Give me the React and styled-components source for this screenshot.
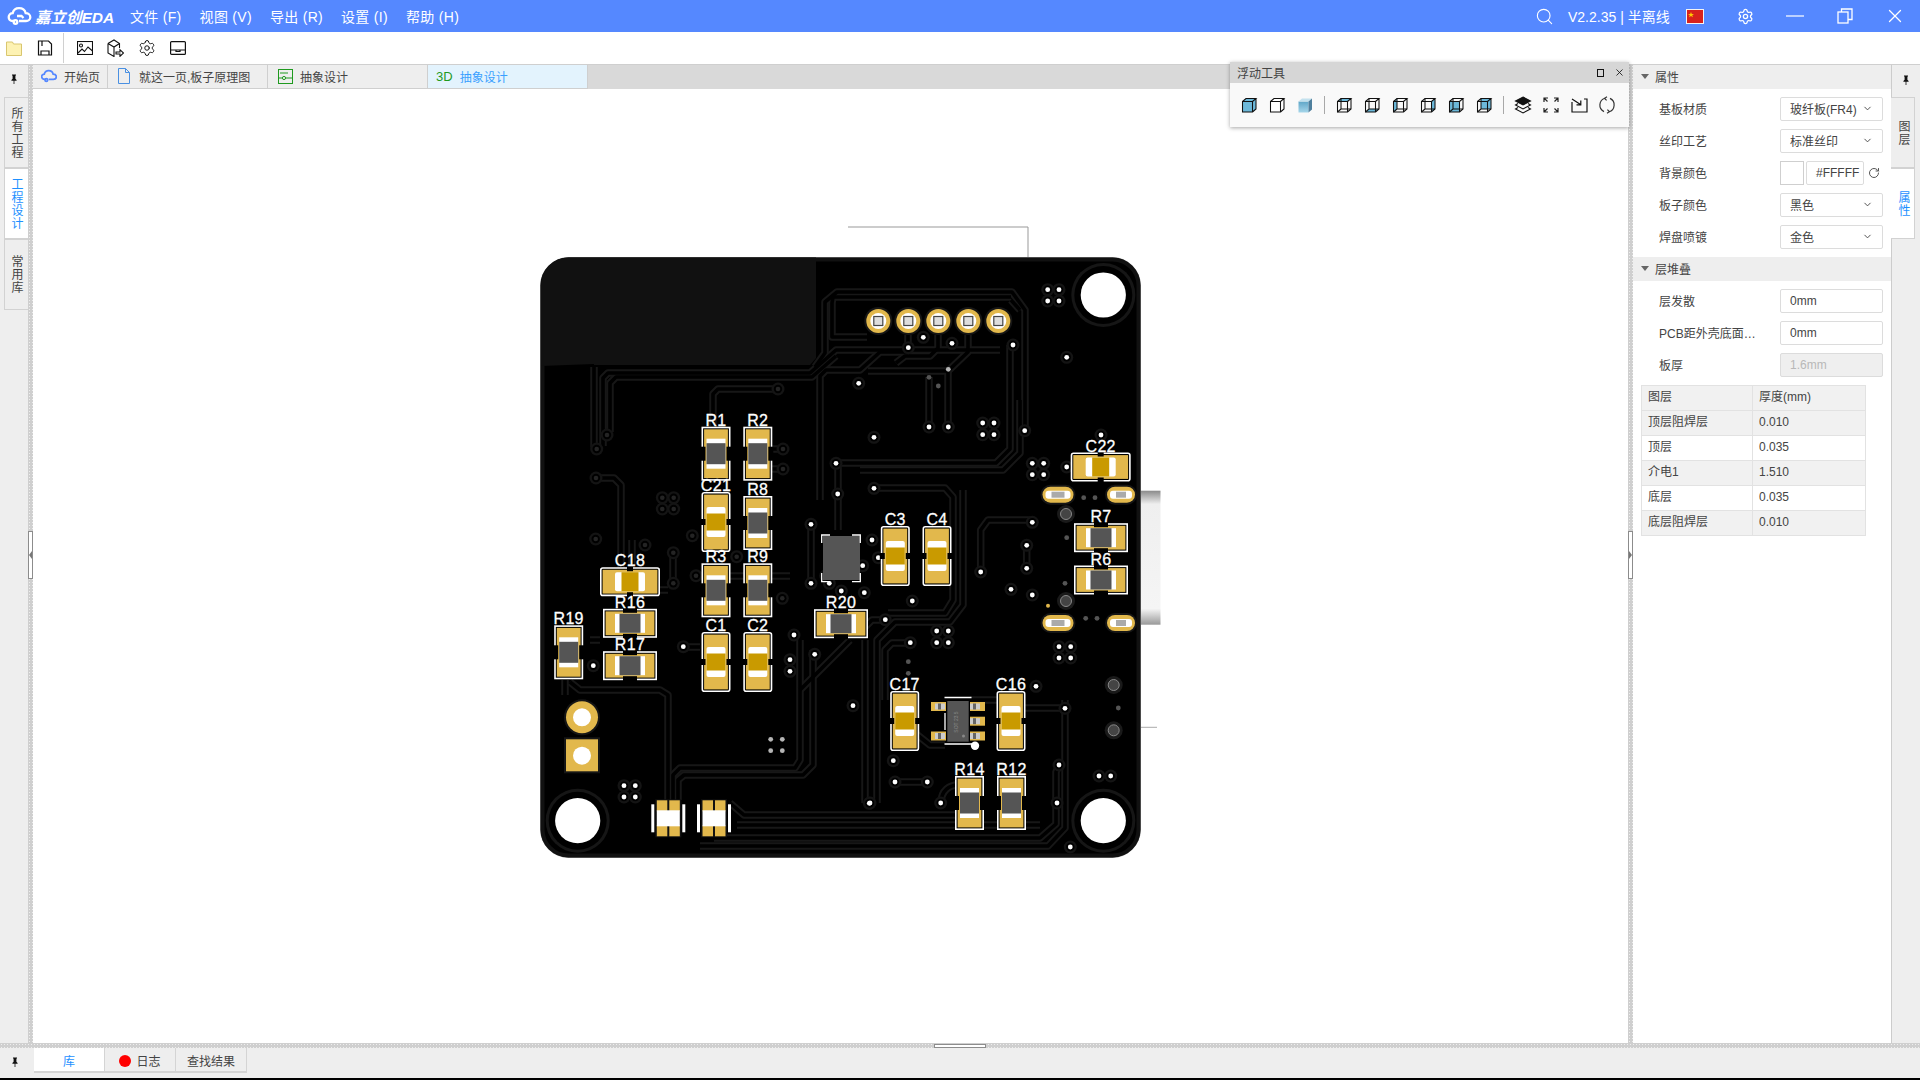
import React from 'react';
import styled, { createGlobalStyle } from 'styled-components';
import { Search, Settings, X, RotateCw, ChevronDown } from 'lucide-react';

const FONT = `"Liberation Sans", "Noto Sans CJK SC", sans-serif`;

const GlobalStyle = createGlobalStyle`
  html, body { margin: 0; padding: 0; background: #fff; }
  body { font-family: ${FONT}; font-size: 12px; color: #333; overflow: hidden; }
  * { box-sizing: border-box; }
`;

const Page = styled.div`
  width: 1920px;
  height: 1080px;
  display: flex;
  flex-direction: column;
  overflow: hidden;
`;

const TitleBar = styled.header`
  height: 32px;
  background: #5588ff;
  color: #fff;
  display: flex;
  align-items: center;
  flex: none;
`;

const Logo = styled.div`
  display: flex;
  align-items: center;
  gap: 3px;
  padding-left: 7px;
  width: 130px;
  font-weight: 700;
  font-style: italic;
  font-size: 15.5px;
  white-space: nowrap;
`;

const Menu = styled.nav`
  display: flex;
  gap: 18px;
  font-size: 14px;
  letter-spacing: 0.3px;
  white-space: nowrap;
  padding-bottom: 1px;
`;

const TitleRight = styled.div`
  margin-left: auto;
  display: flex;
  align-items: center;
  height: 100%;
`;

const TitleSlot = styled.div`
  width: ${(p) => p.$w}px;
  display: flex;
  align-items: center;
  justify-content: ${(p) => p.$justify || 'center'};
  padding-left: ${(p) => p.$pad || 0}px;
  font-size: ${(p) => p.$fs || 13}px;
  white-space: nowrap;
`;

const Toolbar = styled.div`
  height: 32px;
  flex: none;
  background: #fff;
  display: flex;
  align-items: center;
  padding-left: 6px;
`;

const ToolButton = styled.div`
  width: ${(p) => p.$w || 31}px;
  height: 20px;
  display: flex;
  align-items: center;
  justify-content: ${(p) => p.$justify || 'center'};
`;

const ToolDivider = styled.div`
  width: 1px;
  height: 30px;
  background: #d0d0d0;
  margin: 0 5px 0 4px;
`;

const Main = styled.div`
  flex: 1;
  min-height: 0;
  display: flex;
  border-top: 1px solid #cfcfcf;
`;

const LeftDock = styled.aside`
  width: 28px;
  flex: none;
  background: #eeeeee;
  display: flex;
  flex-direction: column;
  padding-left: 4px;
`;

const DockPin = styled.div`
  height: 32px;
  margin-left: -4px;
  padding-bottom: 5px;
  display: flex;
  align-items: center;
  justify-content: center;
  color: #222;
`;

const VTab = styled.div`
  height: 71px;
  display: flex;
  align-items: center;
  justify-content: center;
  writing-mode: vertical-rl;
  letter-spacing: 1px;
  line-height: 1;
  font-size: 12px;
  padding-left: ${(p) => (p.$side === 'right' ? 1 : 0)}px;
  padding-right: ${(p) => (p.$side === 'left' ? 1 : 0)}px;
  background: ${(p) => (p.$active ? '#fff' : '#eeeeee')};
  color: ${(p) => (p.$active ? '#1e90ff' : '#444')};
  border: 1px solid #d2d2d2;
  border-right: ${(p) => (p.$side === 'left' ? 'none' : '1px solid #d2d2d2')};
  border-left: ${(p) => (p.$side === 'right' ? 'none' : '1px solid #d2d2d2')};
`;

const Splitter = styled.div`
  width: 5px;
  flex: none;
  position: relative;
  background-color: #cfcfcf;
  background-image: radial-gradient(#eeeeee 0.7px, transparent 0.8px);
  background-size: 3px 3px;
`;

const Grip = styled.div`
  position: absolute;
  left: 0;
  top: 466px;
  width: 5px;
  height: 48px;
  background: #fff;
  border: 1px solid #8c8c8c;
  &::after {
    content: '';
    position: absolute;
    left: 0;
    top: 19px;
    border-style: solid;
    border-width: 4px 3px;
    border-color: transparent;
    border-${(p) => (p.$dir === 'right' ? 'left' : 'right')}-color: #777;
    margin-left: ${(p) => (p.$dir === 'right' ? 0 : -3)}px;
  }
`;

const Center = styled.main`
  flex: 1;
  min-width: 0;
  display: flex;
  flex-direction: column;
  position: relative;
`;

const TabRow = styled.div`
  height: 24px;
  flex: none;
  display: flex;
  background: #d9d9d9;
`;

const DocTab = styled.div`
  width: ${(p) => p.$w}px;
  display: flex;
  align-items: center;
  gap: ${(p) => p.$gap || 7}px;
  padding-left: ${(p) => p.$pad || 8}px;
  padding-bottom: 1px;
  background: ${(p) => (p.$active ? '#e3f3fd' : '#eeeeee')};
  color: ${(p) => (p.$active ? '#3a9fff' : '#444')};
  border-right: 1px solid #cfcfcf;
  border-bottom: 1px solid #cfcfcf;
  white-space: nowrap;
`;

const ThreeD = styled.span`
  color: #1f9a1f;
  font-size: 13px;
`;

const Canvas = styled.div`
  flex: 1;
  background: #fff;
  padding: 131px 0 0 497px;
`;

const FloatPanel = styled.section`
  position: absolute;
  top: -3px;
  right: -1px;
  width: 399px;
  height: 65px;
  background: #f9f9f9;
  box-shadow: 0 1px 4px rgba(0, 0, 0, 0.35);
  z-index: 5;
`;

const FloatHead = styled.div`
  height: 21px;
  background: #d6d6d6;
  display: flex;
  align-items: center;
  padding: 0 4px 0 7px;
  color: #444;
`;

const FloatHeadIcons = styled.div`
  margin-left: auto;
  display: flex;
  align-items: center;
  gap: 10px;
`;

const MaxBox = styled.div`
  width: 7px;
  height: 8px;
  border: 1px solid #111;
`;

const FloatBody = styled.div`
  height: 44px;
  display: flex;
  align-items: center;
  padding-left: 5px;
`;

const FloatIcon = styled.div`
  width: 28px;
  display: flex;
  justify-content: center;
`;

const FloatDivider = styled.div`
  width: 1px;
  height: 18px;
  background: #a8a8a8;
  margin: 0 5px;
`;

const RightPanel = styled.aside`
  width: 258px;
  flex: none;
  background: #fff;
  display: flex;
  flex-direction: column;
`;

const SectionHead = styled.div`
  height: 24px;
  background: #eeeeee;
  display: flex;
  align-items: center;
  gap: 6px;
  padding: 0 0 1px 8px;
  color: #444;
`;

const Caret = styled.span`
  width: 0;
  height: 0;
  border-style: solid;
  border-width: 5px 4.5px 0;
  border-color: #666 transparent transparent;
`;

const Fields = styled.div`
  display: flex;
  flex-direction: column;
  gap: 8px;
  padding: 8px 8px 8px 26px;
`;

const Field = styled.div`
  height: 24px;
  display: flex;
  align-items: center;
  color: #444;
`;

const FieldLabel = styled.label`
  width: 121px;
  white-space: nowrap;
  overflow: hidden;
  padding-bottom: 1px;
`;

const Control = styled.div`
  width: ${(p) => p.$w || 103}px;
  height: 24px;
  border: 1px solid #dcdcdc;
  border-radius: 2px;
  background: ${(p) => (p.$disabled ? '#efefef' : '#fff')};
  color: ${(p) => (p.$disabled ? '#b8b8b8' : '#444')};
  display: flex;
  align-items: center;
  justify-content: space-between;
  padding: 0 9px 1px;
  white-space: nowrap;
  overflow: hidden;
`;

const Swatch = styled.div`
  width: 24px;
  height: 24px;
  border: 1px solid #cfcfcf;
  background: #fff;
  margin-right: 2px;
  flex: none;
`;

const ThickTable = styled.table`
  width: 225px;
  margin: 0 0 0 8px;
  border-collapse: collapse;
  table-layout: fixed;
  color: #444;
  td {
    height: 25px;
    padding: 0 6px 3px;
    border: 1px solid #e2e2e2;
    line-height: 16px;
  }
  td:first-child { width: 111px; }
  tr:nth-child(odd) td { background: #fff; }
  tr:nth-child(even) td { background: #f1f1f1; }
  tr:first-child td { background: #f1f1f1; }
`;

const RightDock = styled.aside`
  width: 29px;
  flex: none;
  background: #eeeeee;
  border-left: 1px solid #cccccc;
  display: flex;
  flex-direction: column;
`;

const RightPin = styled.div`
  height: 32px;
  display: flex;
  align-items: center;
  justify-content: center;
  padding: 0 1px 3px 0;
`;

const RightTabs = styled.div`
  width: 24px;
  margin-left: -1px;
  display: flex;
  flex-direction: column;
`;

const HSplitter = styled.div`
  height: 5px;
  flex: none;
  position: relative;
  background-color: #cfcfcf;
  background-image: radial-gradient(#eeeeee 0.7px, transparent 0.8px);
  background-size: 3px 3px;
`;

const HGrip = styled.div`
  position: absolute;
  left: 934px;
  top: 1px;
  width: 52px;
  height: 4px;
  background: #fff;
  border: 1px solid #8c8c8c;
`;

const BottomBar = styled.footer`
  height: 30px;
  flex: none;
  background: #eeeeee;
  display: flex;
  padding-left: 34px;
  position: relative;
`;

const BottomPin = styled.div`
  position: absolute;
  left: 10px;
  top: 8px;
`;

const BottomTab = styled.div`
  width: 71px;
  height: 25px;
  display: flex;
  align-items: center;
  justify-content: center;
  gap: 5px;
  padding-top: 2px;
  background: ${(p) => (p.$active ? '#fff' : '#eeeeee')};
  color: ${(p) => (p.$active ? '#1e90ff' : '#444')};
  border-right: 1px solid #d4d4d4;
  border-bottom: 2px solid #d4d4d4;
`;

const RedDot = styled.span`
  width: 12px;
  height: 12px;
  border-radius: 50%;
  background: #f00;
`;

const BlackEdge = styled.div`
  height: 2px;
  background: #000;
  flex: none;
`;

// ---- icons

function PinIcon({ size = 10 }) {
  return (
    <svg width={size} height={size} viewBox="0 0 10 10">
      <path d="M3 0.5h4v1H6.4v3.2L7.6 6v0.8H2.4V6l1.2-1.3V1.5H3z M4.6 6.8h0.8V10H4.6z" fill="#111" />
    </svg>
  );
}

function CloudLogo() {
  return (
    <svg width="25" height="18" viewBox="0 0 24 18" fill="none" stroke="#fff" strokeWidth="2.3">
      <path d="M7 14H5.5C3 14 1.2 12.4 1.2 10c0-2.2 1.8-3.9 4-3.9C6 3 8.4 1.2 11.5 1.2c3.4 0 6 2.2 6.7 5 2.6 0 4.6 1.6 4.6 4 0 2.3-2 3.8-4.3 3.8h-7" />
      <circle cx="8" cy="15" r="1.8" />
      <path d="M9.5 9h4.5l2 2" />
    </svg>
  );
}

function Flag() {
  return (
    <svg width="18" height="15" viewBox="0 0 18 15">
      <rect x="0.5" y="0.5" width="17" height="14" fill="#d8211c" stroke="#f4f4f4" />
      <path d="M5 3l0.8 2H8L6.2 6.2 7 8.3 5 7 3 8.3l0.8-2.1L2 5h2.2z" fill="#fc0" />
    </svg>
  );
}

function MinimizeIcon() {
  return (
    <svg width="18" height="4" viewBox="0 0 18 4">
      <rect x="0" y="1.4" width="18" height="1.2" fill="#fff" />
    </svg>
  );
}

function RestoreIcon() {
  return (
    <svg width="16" height="16" viewBox="0 0 16 16" fill="none" stroke="#fff" strokeWidth="1.3">
      <rect x="1" y="4" width="10" height="11" />
      <path d="M4.5 4V1H15v10.5h-4" />
    </svg>
  );
}

function FolderIcon() {
  return (
    <svg width="16" height="16" viewBox="0 0 16 16">
      <path d="M0.5 2h6l1 2h8v11.5H0.5z" fill="#fdf2b3" stroke="#d9c66f" />
    </svg>
  );
}

function SaveIcon() {
  return (
    <svg width="16" height="16" viewBox="0 0 16 16" fill="none" stroke="#111" strokeWidth="1.2">
      <path d="M1.5 1h10l3 3v11h-13z M4 15v-4h8v4 M5 1v5" />
    </svg>
  );
}

function ImageIcon() {
  return (
    <svg width="16" height="14" viewBox="0 0 16 14" fill="none" stroke="#111" strokeWidth="1.1">
      <rect x="0.5" y="0.5" width="15" height="13" />
      <circle cx="4" cy="4.5" r="1.5" />
      <path d="M1 12l4-4 2.5 2.5L11 6l4.5 4" />
    </svg>
  );
}

function BoxExportIcon() {
  return (
    <svg width="17" height="18" viewBox="0 0 17 18" fill="none" stroke="#111" strokeWidth="1.1">
      <path d="M1 4.5L7 1l5.5 3.5V9 M1 4.5V14l6 3.5V8 M1 4.5L7 8l5.5-3.5" />
      <path d="M9 13h4V10.7l3.5 3.3-3.5 3.3V15H9z" />
    </svg>
  );
}

function PanelIcon() {
  return (
    <svg width="16" height="14" viewBox="0 0 16 14" fill="none" stroke="#111" strokeWidth="1.2">
      <rect x="0.6" y="0.6" width="14.8" height="12.8" rx="1" />
      <path d="M0.6 9h14.8 M6 9v1.5h4V9" />
    </svg>
  );
}

function StartCloud() {
  return (
    <svg width="16" height="14" viewBox="0 0 24 20" fill="none" stroke="#5588ff" strokeWidth="2.6">
      <path d="M7 15H5.5C3 15 1 13.4 1 11c0-2.2 1.8-3.9 4-3.9C5.8 4 8.4 2 11.5 2c3.4 0 6 2.2 6.7 5.2 2.6 0 4.8 1.6 4.8 4 0 2.3-2 3.8-4.5 3.8h-7" />
      <circle cx="8" cy="16" r="2" />
    </svg>
  );
}

function DocIcon() {
  return (
    <svg width="12" height="16" viewBox="0 0 12 16" fill="none" stroke="#4a90e2">
      <path d="M0.5 0.5h7l4 4v11h-11z M7.5 0.5v4h4" />
    </svg>
  );
}

function PcbTabIcon() {
  return (
    <svg width="15" height="15" viewBox="0 0 15 15" fill="none" stroke="#1f9a1f">
      <rect x="0.5" y="0.5" width="14" height="14" />
      <path d="M0.5 9h4 M7.5 9h7 M2 4h8" />
      <circle cx="6" cy="9" r="1.6" />
    </svg>
  );
}

const CUBE_BLUE = '#6cb8d9';

// wireframe box, face says which side is shaded
function CubeIcon({ face, solid, blank }) {
  const faces = {
    top: 'M1.5 4.5L5 1.5H15L11.5 4.5z',
    right: 'M11.5 4.5L15 1.5V12L11.5 15z',
    front: 'M1.5 4.5H11.5V15H1.5z',
    back: 'M5 1.5H15V12H5z',
    left: 'M1.5 4.5L5 1.5V12L1.5 15z',
    bottom: 'M1.5 15L5 12H15L11.5 15z',
  };
  return (
    <svg width="17" height="17" viewBox="0 0 17 17" fill="none" stroke="#111" strokeWidth="1.05">
      {solid && <path d="M1.5 4.5L5 1.5H15V12L11.5 15H1.5z" fill={CUBE_BLUE} stroke="none" />}
      {face && <path d={faces[face]} fill={CUBE_BLUE} stroke="none" />}
      {blank && <path d="M1.5 4.5L5 1.5H15V12L11.5 15H1.5z" fill="#fff" stroke="none" />}
      <path d="M1.5 4.5H11.5V15H1.5z M1.5 4.5L5 1.5H15L11.5 4.5 M15 1.5V12L11.5 15" />
      {!solid && !blank && <path d="M5 1.5V12H15 M5 12L1.5 15" />}
    </svg>
  );
}

function ShadedCube() {
  return (
    <svg width="17" height="17" viewBox="0 0 17 17">
      <defs>
        <linearGradient id="cubeFront" x1="0" y1="0" x2="0" y2="1">
          <stop offset="0" stopColor="#5fa6c8" />
          <stop offset="1" stopColor="#a6d6ea" />
        </linearGradient>
      </defs>
      <path d="M1.5 4.5H11.5V15.5H1.5z" fill="url(#cubeFront)" />
      <path d="M1.5 4.5L5 1.5H15L11.5 4.5z" fill="#c3e1ee" />
      <path d="M11.5 4.5L15 1.5V12.5L11.5 15.5z" fill="#4f7f9d" />
    </svg>
  );
}

function LayersIcon() {
  return (
    <svg width="18" height="18" viewBox="0 0 18 18" fill="none" stroke="#111" strokeWidth="1.1">
      <path d="M9 1L16.5 5 9 9 1.5 5z" fill="#111" />
      <path d="M4 7.5L1.5 9 9 13l7.5-4L14 7.5 M4 11.5L1.5 13 9 17l7.5-4L14 11.5" />
    </svg>
  );
}

function FitIcon() {
  return (
    <svg width="16" height="16" viewBox="0 0 16 16" fill="none" stroke="#222" strokeWidth="1.2">
      <path d="M1 5V1h4 M1 1l3.5 3.5 M15 5V1h-4 M15 1l-3.5 3.5 M1 11v4h4 M1 15l3.5-3.5 M15 11v4h-4 M15 15l-3.5-3.5" />
    </svg>
  );
}

function ImportIcon() {
  return (
    <svg width="17" height="16" viewBox="0 0 17 16" fill="none" stroke="#111" strokeWidth="1.2">
      <path d="M1 5v10h15V2h-3" />
      <path d="M1 2l8.5 5.5 M9.8 3.5v4.3H5.5" />
    </svg>
  );
}

function RotateIcon() {
  return (
    <svg width="18" height="18" viewBox="0 0 18 18" fill="none" stroke="#333" strokeWidth="1.2">
      <path d="M7 2.2A7.2 7.2 0 0 0 6 15.6 M11 15.8A7.2 7.2 0 0 0 12 2.4" />
      <path d="M9 0.8L6.6 2.3 8.6 4.4 M9 17.2l2.4-1.5-2-2.1" />
    </svg>
  );
}

// ---- board data, in page coordinates

const WHITE_VIAS = [
  [858.7, 383.3], [836, 463.3], [837.7, 494], [1047.7, 289.7], [1059, 289.7], [1047.7, 301], [1059, 301],
  [923.3, 337.3], [908.3, 347.7], [952, 343.3], [1013, 345], [1066.7, 357.3], [929, 427], [948.3, 427],
  [1024.7, 430.7], [982.7, 423], [994, 423], [982.7, 434.7], [994, 434.7], [874, 437.3], [1101, 435],
  [1032.3, 463.3], [1043.7, 463.3], [1032.3, 474.7], [1043.7, 474.7], [1066.7, 467], [874, 488.3],
  [683.3, 646.7], [593.3, 665.7], [794, 635], [790, 659.7], [790, 671.3], [814.7, 654.3], [853, 705.7],
  [624, 785.7], [635.3, 785.7], [624, 797], [635.3, 797], [811, 524.3], [811, 583.3], [862.7, 565.7],
  [825.7, 575.7], [829.3, 583.3], [841.3, 591], [864.3, 592.7], [869.3, 803.3], [872, 540], [878.3, 557.7],
  [912.3, 601], [885.3, 619.7], [936.7, 631], [948.3, 631], [936.7, 642.7], [948.3, 642.7], [910.3, 642.7],
  [1036, 686.3], [1065, 708.3], [893.3, 760.7], [895, 782], [927.3, 782], [940.7, 803], [870, 803],
  [1059, 765], [1057, 803], [1099, 776], [1110.7, 776], [1070.3, 847], [980.7, 572], [1026.7, 545.3],
  [1026.7, 568.3], [1011, 589.3], [1032.3, 595], [1059, 646.7], [1070.7, 646.7], [1059, 658], [1070.7, 658],
  [1032.3, 522.3],
];

const GRAY_VIAS = [
  [929, 377.3], [938.3, 386], [1083.7, 497.7], [1095, 497.7], [908.3, 661.7], [908.3, 673.3],
  [1065, 583.3], [1066.7, 537.7], [1085.7, 618.3], [1097, 618.3], [1118.3, 708],
];

const LIGHT_VIAS = [[770.7, 739.3], [782.3, 739.3], [770.7, 750.7], [782.3, 750.7], [948.3, 369.3]];

const DIM_VIAS = [
  [662.3, 497.7], [673.7, 497.7], [662.3, 509], [673.7, 509], [596.7, 449], [607, 435], [778, 389],
  [783, 449], [783, 469], [596, 478], [595.7, 539], [645, 545], [673.3, 552.7], [673.3, 583.3], [696, 575.7],
  [692.3, 535.7], [736.7, 556.7], [782.3, 598.3],
];

const TRACES = [
  'M594 367V447',
  'M603 446V378L608 373H810L836 350H1000',
  'M610 432V383L616 377H812L836 356',
  'M778 389H718L713 394V426',
  'M783 449H745 M783 469H745',
  'M596 478H614L621 485V580L628 590H668',
  'M836 463H996L1010 449V345',
  'M860 470H1003L1020 453V400',
  'M1025 431V310L1012 292H837L825 302V353L815 367',
  'M1011 297H833L832 303V337H867',
  'M1020 310L1011 300',
  'M908 335V352H880L860 370H826L820 376V500',
  'M938 335V348L930 356H905L896 363',
  'M968 335V352L948 371 H868',
  'M929 377V427 M948 369V427',
  'M874 488H945L953 497V600L945 613H888',
  'M980.7 572V530L988 520H1032',
  'M1026.7 545V568',
  'M963 490V605L950 622H895L877 640V803',
  'M865 640V803',
  'M885 620H872L860 632',
  'M910 643H892L885 650V700',
  'M668 800V695L660 690H580L570 682',
  'M673 800V775L680 768H795L800 760V640',
  'M678 800V780L684 775H803L813 765V650',
  'M730 803L744 815H955',
  'M737 825H1040',
  'M714 838H1040L1056 824V772L1059 765',
  'M700 846H1048L1065 828V700',
  'M895 782H927',
  'M941 803C941 790 950 785 958 785',
  'M1065 708H1020',
  'M683 647H700',
  'M850 640L800 690',
  'M632 540V565 M673 553V583 M696 576H790',
  'M838 463V530 M811 524V583',
  'M1012 700H970',
  'M905 725L930 745H945',
  'M590 640H600 M565 680V695',
];

const BoardLabel = styled.text`
  fill: #fff;
  stroke: #fff;
  stroke-width: 0.3px;
  font-family: "Liberation Sans", sans-serif;
  font-size: 16px;
  letter-spacing: 0.3px;
  text-anchor: middle;
`;

const ChipText = styled.text`
  fill: #8a8a8a;
  font-family: "Liberation Sans", sans-serif;
  font-size: 5px;
  text-anchor: middle;
`;

// a two terminal part with its pads, body and silkscreen label
function Part({ cx, cy, kind, horizontal, label, long }) {
  const len = long ? 60 : 54;
  const w = 29;
  const isCap = kind === 'C';
  const bodyW = 19;
  const bodyL = isCap ? 17 : 21;
  const stripe = isCap ? 6.5 : 4.5;
  const gold = '#e2b84c';
  const t = horizontal ? `translate(${cx} ${cy}) rotate(90)` : `translate(${cx} ${cy})`;
  const body = isCap ? '#c99a00' : '#555555';
  const top = horizontal ? cy - w / 2 : cy - len / 2;
  const gap = isCap ? 3 : 7;
  return (
    <g>
      <g transform={t}>
        <rect x={-w / 2 + 0.8} y={-len / 2 + 0.8} width={w - 1.6} height={len - 1.6} fill="#000" stroke="#fff" strokeWidth="1.6" rx={long ? 2 : 0} />
        <rect x={-w / 2 + 2.6} y={-len / 2 + 2.6} width={w - 5.2} height={len - 5.2} fill={gold} />
        <rect x={-w / 2 - 1} y={-gap} width={5} height={gap * 2} fill="#000" />
        <rect x={w / 2 - 4} y={-gap} width={5} height={gap * 2} fill="#000" />
        <rect x={-bodyW / 2} y={-bodyL / 2 - stripe} width={bodyW} height={bodyL + stripe * 2} fill="#fff" rx={isCap ? 2 : 0} />
        <rect x={-bodyW / 2} y={-bodyL / 2} width={bodyW} height={bodyL} fill={body} />
      </g>
      <BoardLabel x={cx} y={top - 1}>{label}</BoardLabel>
    </g>
  );
}

const PARTS = [
  { cx: 716, cy: 453.7, kind: 'R', label: 'R1' },
  { cx: 757.8, cy: 453.7, kind: 'R', label: 'R2' },
  { cx: 716, cy: 522, kind: 'C', long: true, label: 'C21' },
  { cx: 757.8, cy: 523, kind: 'R', label: 'R8' },
  { cx: 716, cy: 590.3, kind: 'R', label: 'R3' },
  { cx: 757.8, cy: 590.3, kind: 'R', label: 'R9' },
  { cx: 716, cy: 662, kind: 'C', long: true, label: 'C1' },
  { cx: 757.8, cy: 662, kind: 'C', long: true, label: 'C2' },
  { cx: 630, cy: 581.7, kind: 'C', long: true, horizontal: true, label: 'C18' },
  { cx: 630, cy: 623.3, kind: 'R', horizontal: true, label: 'R16' },
  { cx: 630, cy: 665.7, kind: 'R', horizontal: true, label: 'R17' },
  { cx: 568.7, cy: 652.3, kind: 'R', label: 'R19' },
  { cx: 841, cy: 623.7, kind: 'R', horizontal: true, label: 'R20' },
  { cx: 895.3, cy: 556, kind: 'C', long: true, label: 'C3' },
  { cx: 937, cy: 556, kind: 'C', long: true, label: 'C4' },
  { cx: 904.7, cy: 721, kind: 'C', long: true, label: 'C17' },
  { cx: 1011, cy: 721, kind: 'C', long: true, label: 'C16' },
  { cx: 969.5, cy: 803, kind: 'R', label: 'R14' },
  { cx: 1011.5, cy: 803, kind: 'R', label: 'R12' },
  { cx: 1101, cy: 537.7, kind: 'R', horizontal: true, label: 'R7' },
  { cx: 1101, cy: 580, kind: 'R', horizontal: true, label: 'R6' },
  { cx: 1100.7, cy: 467, kind: 'C', long: true, horizontal: true, label: 'C22' },
];

function HeaderPin({ x }) {
  return (
    <g>
      <circle cx={x} cy={321} r={14} fill="#161616" />
      <circle cx={x} cy={321} r={12} fill="#e2b84c" />
      <circle cx={x} cy={321} r={8} fill="#fff" />
      <rect x={x - 4.5} y={316.5} width={9} height={9} fill="#ddd" stroke="#444" strokeWidth="1.2" />
    </g>
  );
}

function SlotPad({ cx, cy, w }) {
  return (
    <g>
      <rect x={cx - w / 2 - 2} y={cy - 10} width={w + 4} height={20} rx={10} fill="#161616" />
      <rect x={cx - w / 2} y={cy - 8} width={w} height={16} rx={8} fill="#e2b84c" />
      <rect x={cx - w / 2 + 3} y={cy - 4} width={w - 6} height={8} rx={3} fill="#fff" />
      <rect x={cx - w / 2 + 9} y={cy - 3} width={w - 18} height={6} fill="#aaa" />
    </g>
  );
}

function Led({ cx }) {
  const cy = 818.3;
  return (
    <g>
      <rect x={cx - 13} y={cy - 19} width={26} height={38} fill="#111" />
      <rect x={cx - 11.5} y={cy - 18} width={10.5} height={11} fill="#e2b84c" />
      <rect x={cx + 1} y={cy - 18} width={10.5} height={11} fill="#e2b84c" />
      <rect x={cx - 11.5} y={cy + 7} width={10.5} height={11} fill="#e2b84c" />
      <rect x={cx + 1} y={cy + 7} width={10.5} height={11} fill="#e2b84c" />
      <rect x={cx - 11.5} y={cy - 8} width={23} height={16} fill="#fff" />
      <rect x={cx - 17} y={cy - 14} width={3} height={28} fill="#fff" />
      <rect x={cx + 14} y={cy - 14} width={3} height={28} fill="#fff" />
    </g>
  );
}

function SotPad({ x, y, flip }) {
  return (
    <g>
      <rect x={x} y={y} width={15} height={9} fill="#e2b84c" />
      <rect x={flip ? x : x + 4} y={y + 1.5} width={10} height={6} fill="#ccc" />
      <rect x={flip ? x + 3 : x + 7} y={y + 1.5} width={3} height={6} fill="#666" />
    </g>
  );
}

function PcbBoard() {
  return (
    <svg width="640" height="660" viewBox="530 220 640 660" style={{ display: 'block' }}>
      <defs>
        <linearGradient id="usbShell" x1="0" y1="0" x2="0" y2="1">
          <stop offset="0" stopColor="#8a8a8a" />
          <stop offset="0.1" stopColor="#efefef" />
          <stop offset="0.88" stopColor="#f5f5f5" />
          <stop offset="1" stopColor="#999" />
        </linearGradient>
      </defs>
      <path d="M848 227H1028V257" fill="none" stroke="#999" />
      <path d="M1141 727.3H1157" stroke="#aaa" />
      <rect x="1141" y="490.7" width="19.5" height="134" fill="url(#usbShell)" />
      <rect x="540.5" y="257.5" width="600" height="600" rx="28" fill="#000" stroke="#888" strokeWidth="0.6" />
      <rect x="542.5" y="259.5" width="596" height="596" rx="26" fill="none" stroke="#111" strokeWidth="4" />
      <path d="M541 366V285A28 28 0 0 1 569 257.5H816V358L810 365H594V364z" fill="#111" />
      <g fill="none" strokeLinejoin="round">
        {TRACES.map((d) => <path key={d} d={d} stroke="#171717" strokeWidth="7.5" />)}
        {TRACES.map((d) => <path key={`in${d}`} d={d} stroke="#000" strokeWidth="3.6" />)}
      </g>
      {[[1103.3, 295], [577.7, 820.7], [1103.3, 820.7]].map(([x, y]) => (
        <g key={x + y}>
          <circle cx={x} cy={y} r={32} fill="#161616" />
          <circle cx={x} cy={y} r={29} fill="#000" />
          <circle cx={x} cy={y} r={22.6} fill="#fff" />
        </g>
      ))}
      {[...WHITE_VIAS, ...DIM_VIAS].map(([x, y]) => (
        <circle key={`h${x}-${y}`} cx={x} cy={y} r={6.5} fill="#141414" />
      ))}
      {[...WHITE_VIAS, ...DIM_VIAS].map(([x, y]) => (
        <circle key={`g${x}-${y}`} cx={x} cy={y} r={4.2} fill="#000" />
      ))}
      {DIM_VIAS.map(([x, y]) => <circle key={`d${x}-${y}`} cx={x} cy={y} r={2.3} fill="#242424" />)}
      {WHITE_VIAS.map(([x, y]) => <circle key={`w${x}-${y}`} cx={x} cy={y} r={2.4} fill="#fff" />)}
      {GRAY_VIAS.map(([x, y]) => <circle key={`v${x}-${y}`} cx={x} cy={y} r={2.4} fill="#555" />)}
      {LIGHT_VIAS.map(([x, y]) => <circle key={`l${x}-${y}`} cx={x} cy={y} r={2.4} fill="#b5b5b5" />)}
      <circle cx={1048} cy={605.7} r={2} fill="#e2b84c" />
      {[878.3, 908.3, 938.3, 968.3, 998.3].map((x) => <HeaderPin key={x} x={x} />)}
      {[[1066, 514], [1066, 601], [1113.7, 685], [1113.7, 730.3]].map(([x, y]) => (
        <g key={y}>
          <circle cx={x} cy={y} r={9} fill="#1a1a1a" />
          <circle cx={x} cy={y} r={5.5} fill="#444" stroke="#888" />
        </g>
      ))}
      <SlotPad cx={1058} cy={494.7} w={31} />
      <SlotPad cx={1121} cy={494.7} w={28} />
      <SlotPad cx={1058} cy={623} w={31} />
      <SlotPad cx={1121} cy={623} w={28} />
      <circle cx={582} cy={717.3} r={18} fill="#161616" />
      <circle cx={582} cy={717.3} r={16} fill="#e2b84c" />
      <circle cx={582} cy={717.3} r={9} fill="#fff" />
      <rect x={564} y={737.3} width={36} height={36} fill="#161616" />
      <rect x={566} y={739.3} width={32} height={32} fill="#e2b84c" />
      <circle cx={582} cy={755.7} r={9} fill="#fff" />
      <Led cx={668.3} />
      <Led cx={714} />
      {PARTS.map((p) => <Part key={p.label} {...p} />)}
      <rect x={823} y={536} width={37} height={44} fill="#555" />
      <path d="M821.7 543V535H830 M852 535H860.3V543 M821.7 573V581.7H830 M852 581.7H860.3V573" fill="none" stroke="#fff" strokeWidth="1.3" />
      <SotPad x={931} y={702} />
      <SotPad x={931} y={731.5} />
      <SotPad x={970} y={702} flip />
      <SotPad x={970} y={716.7} flip />
      <SotPad x={970} y={731.5} flip />
      <rect x={947.3} y={701} width={21.4} height={40.7} fill="#555" />
      <ChipText x={958} y={722} transform="rotate(-90 958 722)">SOT 23 5</ChipText>
      <circle cx={963.5} cy={736} r={1.5} fill="#888" />
      <path d="M944.5 697.5H971.5 M945 713V730 M944.5 744H972" fill="none" stroke="#fff" strokeWidth="1.3" />
      <circle cx={975} cy={745.7} r={4.2} fill="#fff" />
    </svg>
  );
}

const SELECTS1 = [
  ['基板材质', '玻纤板(FR4)'],
  ['丝印工艺', '标准丝印'],
];
const SELECTS2 = [
  ['板子颜色', '黑色'],
  ['焊盘喷镀', '金色'],
];
const THICKNESS = [
  ['图层', '厚度(mm)'],
  ['顶层阻焊层', '0.010'],
  ['顶层', '0.035'],
  ['介电1', '1.510'],
  ['底层', '0.035'],
  ['底层阻焊层', '0.010'],
];

function SelectField({ label, value }) {
  return (
    <Field>
      <FieldLabel>{label}</FieldLabel>
      <Control>
        {value}
        <ChevronDown size={11} color="#444" strokeWidth={2} />
      </Control>
    </Field>
  );
}

export default function App() {
  return (
    <Page>
      <GlobalStyle />
      <TitleBar>
        <Logo>
          <CloudLogo />
          嘉立创EDA
        </Logo>
        <Menu>
          <span>文件 (F)</span>
          <span>视图 (V)</span>
          <span>导出 (R)</span>
          <span>设置 (I)</span>
          <span>帮助 (H)</span>
        </Menu>
        <TitleRight>
          <TitleSlot $w={36}><Search size={19} color="#fff" strokeWidth={1.4} /></TitleSlot>
          <TitleSlot $w={124} $fs={14} $justify="flex-start" $pad={6}>V2.2.35 | 半离线</TitleSlot>
          <TitleSlot $w={29} $justify="flex-start"><Flag /></TitleSlot>
          <TitleSlot $w={60}><Settings size={17} color="#fff" strokeWidth={1.8} /></TitleSlot>
          <TitleSlot $w={40}><MinimizeIcon /></TitleSlot>
          <TitleSlot $w={60}><RestoreIcon /></TitleSlot>
          <TitleSlot $w={40}><X size={22} color="#fff" strokeWidth={1.4} /></TitleSlot>
          <TitleSlot $w={5} />
        </TitleRight>
      </TitleBar>

      <Toolbar>
        <ToolButton $w={31} $justify="flex-start"><FolderIcon /></ToolButton>
        <ToolButton $w={22} $justify="flex-start"><SaveIcon /></ToolButton>
        <ToolDivider />
        <ToolButton><ImageIcon /></ToolButton>
        <ToolButton><BoxExportIcon /></ToolButton>
        <ToolButton><Settings size={18} color="#111" strokeWidth={1.3} /></ToolButton>
        <ToolButton><PanelIcon /></ToolButton>
      </Toolbar>

      <Main>
        <LeftDock>
          <DockPin><PinIcon /></DockPin>
          <VTab $side="left">所有工程</VTab>
          <VTab $side="left" $active>工程设计</VTab>
          <VTab $side="left">常用库</VTab>
        </LeftDock>
        <Splitter><Grip $dir="left" /></Splitter>
        <Center>
          <TabRow>
            <DocTab $w={75}><StartCloud />开始页</DocTab>
            <DocTab $w={160} $pad={10} $gap={9}><DocIcon />就这一页,板子原理图</DocTab>
            <DocTab $w={160} $pad={10}><PcbTabIcon />抽象设计</DocTab>
            <DocTab $w={160} $active><ThreeD>3D</ThreeD>抽象设计</DocTab>
          </TabRow>
          <Canvas>
            <PcbBoard />
          </Canvas>
          <FloatPanel>
            <FloatHead>
              浮动工具
              <FloatHeadIcons>
                <MaxBox />
                <X size={11} color="#111" strokeWidth={1.8} />
              </FloatHeadIcons>
            </FloatHead>
            <FloatBody>
              <FloatIcon><CubeIcon solid /></FloatIcon>
              <FloatIcon><CubeIcon blank /></FloatIcon>
              <FloatIcon><ShadedCube /></FloatIcon>
              <FloatDivider />
              <FloatIcon><CubeIcon face="top" /></FloatIcon>
              <FloatIcon><CubeIcon face="bottom" /></FloatIcon>
              <FloatIcon><CubeIcon face="left" /></FloatIcon>
              <FloatIcon><CubeIcon face="right" /></FloatIcon>
              <FloatIcon><CubeIcon face="front" /></FloatIcon>
              <FloatIcon><CubeIcon face="back" /></FloatIcon>
              <FloatDivider />
              <FloatIcon><LayersIcon /></FloatIcon>
              <FloatIcon><FitIcon /></FloatIcon>
              <FloatIcon><ImportIcon /></FloatIcon>
              <FloatIcon><RotateIcon /></FloatIcon>
            </FloatBody>
          </FloatPanel>
        </Center>
        <Splitter><Grip $dir="right" /></Splitter>
        <RightPanel>
          <SectionHead><Caret />属性</SectionHead>
          <Fields>
            {SELECTS1.map(([l, v]) => <SelectField key={l} label={l} value={v} />)}
            <Field>
              <FieldLabel>背景颜色</FieldLabel>
              <Swatch />
              <Control $w={58}>#FFFFF</Control>
              <RotateCw size={12} color="#555" style={{ marginLeft: 4 }} />
            </Field>
            {SELECTS2.map(([l, v]) => <SelectField key={l} label={l} value={v} />)}
          </Fields>
          <SectionHead><Caret />层堆叠</SectionHead>
          <Fields>
            <Field><FieldLabel>层发散</FieldLabel><Control>0mm</Control></Field>
            <Field><FieldLabel>PCB距外壳底面…</FieldLabel><Control>0mm</Control></Field>
            <Field><FieldLabel>板厚</FieldLabel><Control $disabled>1.6mm</Control></Field>
          </Fields>
          <ThickTable>
            <tbody>
              {THICKNESS.map(([a, b]) => (
                <tr key={a}><td>{a}</td><td>{b}</td></tr>
              ))}
            </tbody>
          </ThickTable>
        </RightPanel>
        <RightDock>
          <RightPin><PinIcon /></RightPin>
          <RightTabs>
            <VTab $side="right">图层</VTab>
            <VTab $side="right" $active>属性</VTab>
          </RightTabs>
        </RightDock>
      </Main>

      <HSplitter><HGrip /></HSplitter>
      <BottomBar>
        <BottomPin><PinIcon /></BottomPin>
        <BottomTab $active>库</BottomTab>
        <BottomTab><RedDot />日志</BottomTab>
        <BottomTab>查找结果</BottomTab>
      </BottomBar>
      <BlackEdge />
    </Page>
  );
}
